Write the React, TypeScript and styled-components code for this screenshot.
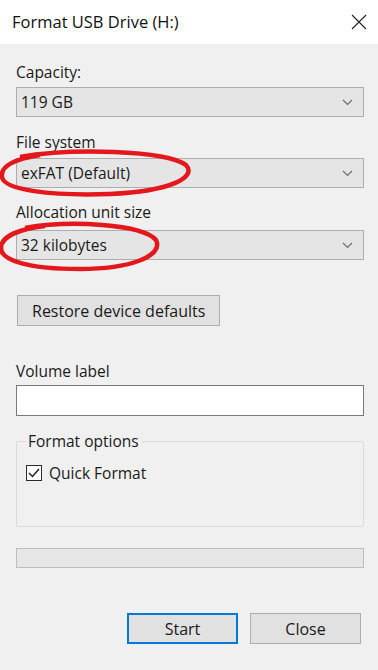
import React from 'react';
import styled, { createGlobalStyle } from 'styled-components';

const Global = createGlobalStyle`
  html, body { margin: 0; padding: 0; background: #f0f0f0; }
  body { font-family: "Open Sans", "Noto Sans", sans-serif; color: #1a1a1a; }
`;

const Window = styled.div`
  position: relative;
  width: 378px;
  height: 670px;
  background: #f0f0f0;
  overflow: hidden;
`;

const TitleBar = styled.div`
  height: 44px;
  background: #fff;
  display: flex;
  align-items: center;
  justify-content: space-between;
  padding: 0 11px 0 12px;
  box-sizing: border-box;
`;

const Title = styled.span`
  font-size: 16.5px;
  color: #111;
  margin-top: -2px;
`;

const Body = styled.div`
  padding: 18px 14px 0 16px;
  display: flex;
  flex-direction: column;
`;

const Label = styled.div<{ $top?: number }>`
  font-size: 15.5px;
  line-height: 20px;
  margin-top: ${(p) => p.$top ?? 0}px;
  color: #1a1a1a;
`;

const Select = styled.div<{ $top?: number }>`
  margin-top: ${(p) => p.$top ?? 5}px;
  height: 30px;
  box-sizing: border-box;
  border: 1px solid #adadad;
  background: #e5e5e5;
  display: flex;
  align-items: center;
  justify-content: space-between;
  padding: 0 10px 0 4px;
  font-size: 15.5px;
`;

const Button = styled.button<{ $primary?: boolean }>`
  height: 31px;
  box-sizing: border-box;
  border: ${(p) => (p.$primary ? '2px solid #0078d7' : '1px solid #adadad')};
  background: #e1e1e1;
  font-family: inherit;
  font-size: 16px;
  color: #1a1a1a;
  padding: 0 14px;
`;

const RestoreRow = styled.div`
  margin-top: 35px;
  display: flex;
  padding-left: 1px;
`;

const TextBox = styled.div`
  margin-top: 4px;
  height: 31px;
  box-sizing: border-box;
  border: 1px solid #7a7a7a;
  background: #fff;
`;

const Group = styled.fieldset`
  margin: 16px 0 0;
  padding: 8px 8px 0 9px;
  height: 95px;
  box-sizing: border-box;
  border: 1px solid #dcdcdc;
  border-radius: 2px;
`;

const Legend = styled.legend`
  font-size: 15.5px;
  padding: 0 2px;
  margin-left: 0;
  line-height: 18px;
`;

const CheckRow = styled.label`
  display: flex;
  align-items: center;
  gap: 7px;
  font-size: 15.5px;
  margin-top: 4px;
`;

const Box = styled.span`
  width: 16px;
  height: 16px;
  box-sizing: border-box;
  border: 1.5px solid #2a2a2a;
  background: #fff;
  display: flex;
  align-items: center;
  justify-content: center;
`;

const Progress = styled.div`
  margin-top: 21px;
  height: 20px;
  box-sizing: border-box;
  border: 1px solid #bcbcbc;
  background: #e6e6e6;
`;

const Footer = styled.div`
  margin-top: 45px;
  display: flex;
  justify-content: flex-end;
  gap: 12px;
  padding-right: 3px;
  & > button { width: 111px; }
`;

const Marks = styled.svg`
  position: absolute;
  left: 0;
  top: 0;
  pointer-events: none;
`;

const Chevron = () => (
  <svg width="11" height="7" viewBox="0 0 11 7">
    <path d="M1 1 L5.5 5.5 L10 1" fill="none" stroke="#6d6d6d" strokeWidth="1.2" />
  </svg>
);

const App: React.FC = () => (
  <Window>
    <Global />
    <TitleBar>
      <Title>Format USB Drive (H:)</Title>
      <svg width="16" height="16" viewBox="0 0 16 16">
        <path d="M1 1 L15 15 M15 1 L1 15" stroke="#222" strokeWidth="1.1" />
      </svg>
    </TitleBar>
    <Body>
      <Label>Capacity:</Label>
      <Select>
        <span>119 GB</span>
        <Chevron />
      </Select>
      <Label $top={15}>File system</Label>
      <Select $top={6}>
        <span>exFAT (Default)</span>
        <Chevron />
      </Select>
      <Label $top={14}>Allocation unit size</Label>
      <Select $top={8}>
        <span>32 kilobytes</span>
        <Chevron />
      </Select>
      <RestoreRow>
        <Button>Restore device defaults</Button>
      </RestoreRow>
      <Label $top={35}>Volume label</Label>
      <TextBox />
      <Group>
        <Legend>Format options</Legend>
        <CheckRow>
          <Box>
            <svg width="12" height="10" viewBox="0 0 12 10">
              <path d="M1 5 L4.5 8.5 L11 1" fill="none" stroke="#222" strokeWidth="1.5" />
            </svg>
          </Box>
          Quick Format
        </CheckRow>
      </Group>
      <Progress />
      <Footer>
        <Button $primary>Start</Button>
        <Button>Close</Button>
      </Footer>
    </Body>
    <Marks width="378" height="670" viewBox="0 0 378 670">
      <path
        d="M20 157 C70 148 165 150 186 165 C197 177 172 191 110 194 C50 196 4 190 2 177 C0 166 15 159 40 155"
        fill="none"
        stroke="#e3171c"
        strokeWidth="4.5"
      />
      <path
        d="M25 228 C70 220 142 224 156 240 C164 256 130 269 80 269 C30 269 1 261 1 248 C1 236 20 229 45 226"
        fill="none"
        stroke="#e3171c"
        strokeWidth="4.5"
      />
    </Marks>
  </Window>
);

export default App;
